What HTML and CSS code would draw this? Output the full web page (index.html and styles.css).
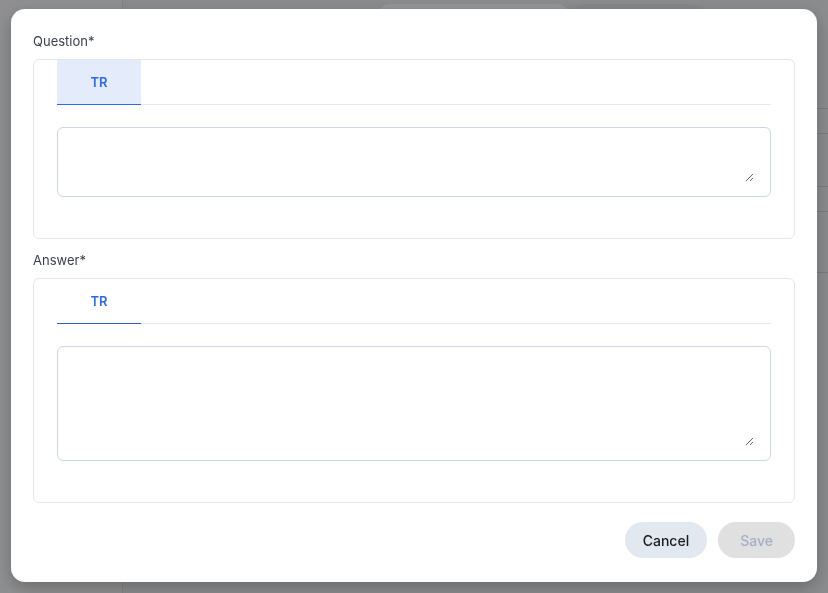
FILE: index.html
```html
<!DOCTYPE html>
<html lang="en">
<head>
    <meta charset="UTF-8">
    <meta name="viewport" content="width=device-width, initial-scale=1.0">
    <title>FAQ</title>
    <link rel="stylesheet" href="styles.css">
</head>
<body>
    <div class="page">
        <aside class="sidebar"></aside>
        <main class="content">
            <div class="toolbar">
                <span class="pill pill-light"></span>
                <span class="pill pill-dark"></span>
            </div>
            <div class="table">
                <div class="row"></div>
                <div class="row"></div>
                <div class="row"></div>
                <div class="row"></div>
                <div class="row"></div>
            </div>
        </main>
    </div>

    <div class="overlay"></div>

    <div class="modal">
        <form class="faq-form">
            <label class="field-label">Question*</label>
            <div class="lang-card">
                <div class="tabs">
                    <button type="button" class="tab tab-active">TR</button>
                </div>
                <div class="field field-short">
                    <textarea name="question_tr"></textarea>
                </div>
            </div>

            <label class="field-label">Answer*</label>
            <div class="lang-card">
                <div class="tabs">
                    <button type="button" class="tab tab-selected">TR</button>
                </div>
                <div class="field field-tall">
                    <textarea name="answer_tr"></textarea>
                </div>
            </div>

            <div class="actions">
                <button type="button" class="btn btn-cancel">Cancel</button>
                <button type="submit" class="btn btn-save" disabled>Save</button>
            </div>
        </form>
    </div>
</body>
</html>
```

FILE: styles.css
```css
body {
    font-family: Inter, "Noto Sans", sans-serif;
    margin: 0;
    padding: 0;
    background-color: #eceef1;
    color: #3b404a;
    height: 593px;
    overflow: hidden;
}

/* page behind the dialog */
.page {
    display: flex;
    height: 593px;
}
.sidebar {
    width: 122px;
    background: #f3f4f6;
    border-right: 1px solid #dcdfe4;
}
.content {
    flex: 1;
    display: flex;
    flex-direction: column;
}
.toolbar {
    display: flex;
    padding: 4px 0 0 253px;
    height: 30px;
}
.pill {
    height: 30px;
    border-radius: 15px;
}
.pill-light {
    width: 195px;
    background: #ffffff;
}
.pill-dark {
    width: 135px;
    background: #e4e6ea;
    margin-left: -2px;
}
.table {
    margin-top: 50px;
    display: flex;
    flex-direction: column;
}
.row {
    height: 24px;
    border-bottom: 1px solid #cfd2d8;
}
.row:nth-child(3) {
    height: 52px;
}
.row:nth-child(5) {
    height: 60px;
}

.overlay {
    position: fixed;
    inset: 0;
    background: rgba(0, 0, 0, 0.41);
}

/* dialog */
.modal {
    position: fixed;
    top: 9px;
    left: 11px;
    width: 806px;
    box-sizing: border-box;
    background: #ffffff;
    border-radius: 14px;
    padding: 23px 22px 24px;
    box-shadow: 0 6px 18px rgba(0, 0, 0, 0.25);
}
.faq-form {
    display: flex;
    flex-direction: column;
}
.field-label {
    display: block;
    font-size: 13px;
    line-height: 18px;
    margin-bottom: 9px;
}
.lang-card {
    border: 1px solid #e3e6ee;
    border-radius: 6px;
    padding: 0 23px 41px;
    margin-bottom: 12px;
}
.tabs {
    display: flex;
    border-bottom: 1px solid #e6e8f2;
    margin-bottom: 22px;
}
.tab {
    width: 84px;
    height: 44px;
    border: none;
    background: none;
    font-family: inherit;
    font-size: 13px;
    font-weight: 600;
    color: #2f6ae0;
    margin-bottom: -1px;
    border-bottom: 1px solid transparent;
    box-sizing: content-box;
    padding: 0;
}
.tab-active {
    background: #e4ebfa;
    border-bottom-color: #2f6ae0;
}
.tab-selected {
    border-bottom-color: #2f5fb8;
}
.field {
    border: 1px solid #cdd6e6;
    border-radius: 6px;
    padding: 14px 16px;
    display: flex;
}
.field textarea {
    flex: 1;
    border: none;
    outline: none;
    padding: 0;
    font-family: inherit;
    font-size: 13px;
    resize: vertical;
}
.field-short textarea {
    height: 40px;
}
.field-tall textarea {
    height: 85px;
}
.actions {
    display: flex;
    justify-content: flex-end;
    gap: 11px;
    margin-top: 7px;
}
.btn {
    height: 36px;
    border: none;
    border-radius: 18px;
    font-family: inherit;
    font-size: 14px;
    font-weight: 500;
    cursor: pointer;
}
.btn-cancel {
    background: #e2e8f0;
    color: #1a1c20;
    padding: 0 18px;
}
.btn-save {
    background: #e0e0e0;
    color: #a3afc2;
    padding: 0 22px;
    cursor: default;
}
```
